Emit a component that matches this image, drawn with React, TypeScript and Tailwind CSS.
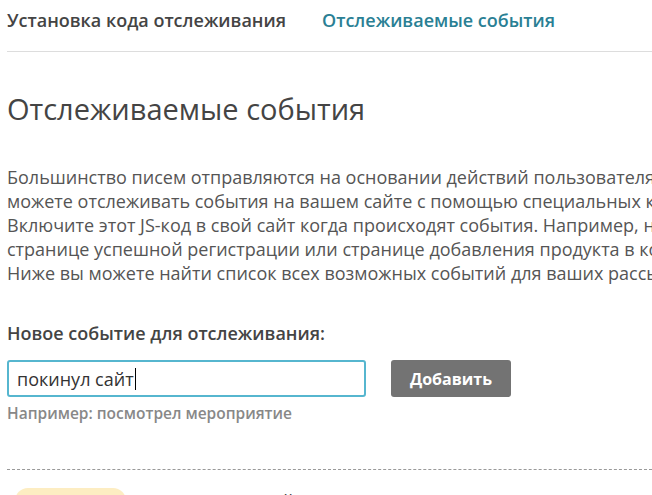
import { useState } from "react";

const intro = [
  "Большинство писем отправляются на основании действий пользователя. Вы",
  "можете отслеживать события на вашем сайте с помощью специальных кодов.",
  "Включите этот JS-код в свой сайт когда происходят события. Например, на",
  "странице успешной регистрации или странице добавления продукта в корзину.",
  "Ниже вы можете найти список всех возможных событий для ваших рассылок.",
];

function Tabs() {
  return (
    <nav className="flex items-center gap-[36px] border-b border-[#dddddd] pb-[19px] pt-[8px] text-[18px] font-semibold leading-[24px]">
      <a className="text-[#444444]">Установка кода отслеживания</a>
      <a className="text-[#2a7f94]">Отслеживаемые события</a>
    </nav>
  );
}

export default function App() {
  const [eventName, setEventName] = useState("покинул сайт");

  return (
    <div
      className="h-[495px] w-[652px] overflow-hidden bg-white pl-[7px]"
      style={{ fontFamily: '"Open Sans", "Noto Sans", sans-serif' }}
    >
      <div className="w-[900px]">
        <Tabs />

        <h1 className="mt-[42px] text-[29px] font-normal leading-[29px] text-[#444444]">
          Отслеживаемые события
        </h1>

        <div className="mt-[42px] text-[18px] leading-[24px] text-[#555555]">
          {intro.map((line) => (
            <div key={line} className="whitespace-nowrap">
              {line}
            </div>
          ))}
        </div>

        <label className="mt-[36px] block text-[18px] font-semibold leading-[24px] text-[#444444]">
          Новое событие для отслеживания:
        </label>

        <div className="mt-[15px] flex items-center gap-[25px]">
          <div className="flex h-[37px] w-[359px] items-center rounded-[3px] border-2 border-[#56b6cf] px-[8px] text-[18px] text-[#333333]">
            <span className="border-r border-black pr-px leading-[22px]">{eventName}</span>
            <input
              className="sr-only"
              value={eventName}
              onChange={(e) => setEventName(e.target.value)}
            />
          </div>
          <button
            type="button"
            className="h-[37px] w-[120px] rounded-[3px] bg-[#737373] text-[16px] font-bold text-white"
          >
            Добавить
          </button>
        </div>

        <p className="mt-[6px] text-[15.5px] font-semibold leading-[21px] text-[#888888]">
          Например: посмотрел мероприятие
        </p>

        <div className="mt-[45px] w-[645px] border-t border-dashed border-[#999999]" />

        <div className="mt-[18px] flex items-start gap-[15px] pl-[8px]">
          <span className="h-[26px] w-[111px] rounded-full bg-[#fdedc2]" />
          <span className="text-[18px] leading-[26px] text-[#444444]">Посетил главный раздел</span>
        </div>
      </div>
    </div>
  );
}
